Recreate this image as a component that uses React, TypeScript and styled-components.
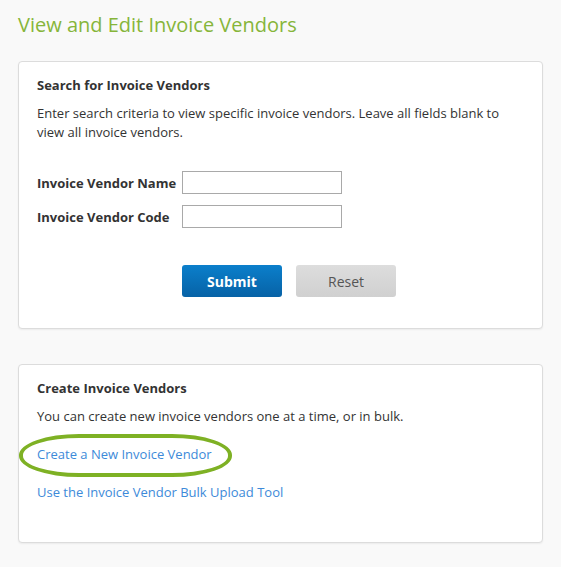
import React from 'react';
import styled, { createGlobalStyle } from 'styled-components';

const GlobalStyle = createGlobalStyle`
  html, body {
    margin: 0;
    padding: 0;
    background: #f9f9f9;
  }
  body {
    font-family: "Open Sans", "Liberation Sans", Arial, sans-serif;
    color: #333;
    font-size: 13px;
  }
`;

const Page = styled.div`
  padding: 11px 18px 24px 18px;
  width: 525px;
`;

const Title = styled.h1`
  margin: 0 0 22px 0;
  font-size: 20px;
  line-height: 28px;
  font-weight: 400;
  color: #86b53a;
`;

const Card = styled.section<{ gapAfter?: number }>`
  background: #fff;
  border: 1px solid #dcdcdc;
  border-radius: 4px;
  box-shadow: 0 1px 2px rgba(0, 0, 0, 0.06);
  padding: 14px 18px 31px 18px;
  margin-bottom: ${p => p.gapAfter ?? 0}px;
`;

const CardHeading = styled.h2`
  margin: 0;
  font-size: 13px;
  line-height: 18px;
  font-weight: 700;
  color: #333;
`;

const Text = styled.p`
  margin: 10px 0 0 0;
  font-size: 13px;
  line-height: 19px;
  color: #333;
`;

const Form = styled.form`
  display: grid;
  grid-template-columns: 145px auto;
  row-gap: 11px;
  align-items: center;
  justify-content: start;
  margin-top: 29px;
`;

const Label = styled.label`
  font-weight: 700;
  font-size: 13px;
  line-height: 18px;
`;

const Input = styled.input`
  box-sizing: border-box;
  width: 160px;
  height: 23px;
  border: 1px solid #a9a9a9;
  border-radius: 0;
  padding: 2px 4px;
  font: inherit;
`;

const Actions = styled.div`
  grid-column: 2;
  display: flex;
  gap: 14px;
  margin-top: 26px;
`;

const Button = styled.button<{ variant: 'primary' | 'secondary' }>`
  flex: 0 0 auto;
  width: 100px;
  height: 32px;
  border: none;
  border-radius: 3px;
  font-family: inherit;
  font-size: 14px;
  font-weight: ${p => (p.variant === 'primary' ? 700 : 400)};
  color: ${p => (p.variant === 'primary' ? '#fff' : '#555')};
  background: ${p =>
    p.variant === 'primary'
      ? 'linear-gradient(#0b7fcb, #0762a6)'
      : 'linear-gradient(#dddddd, #d0d0d0)'};
  cursor: pointer;
`;

const LinkList = styled.div`
  display: flex;
  flex-direction: column;
  gap: 19px;
  margin-top: 19px;
  padding-bottom: 9px;
`;

const LinkWrap = styled.div`
  position: relative;
  align-self: flex-start;
`;

const Link = styled.a`
  color: #3d8ad9;
  text-decoration: none;
  font-size: 13px;
  line-height: 19px;
  display: inline-block;
`;

const Highlight = styled.span`
  position: absolute;
  left: -18px;
  top: -11px;
  width: 205px;
  height: 35px;
  border: 4px solid #7eb124;
  border-radius: 60px / 21px;
  pointer-events: none;
`;

export default function App() {
  return (
    <>
      <GlobalStyle />
      <Page>
        <Title>View and Edit Invoice Vendors</Title>
        <Card gapAfter={35}>
          <CardHeading>Search for Invoice Vendors</CardHeading>
          <Text>
            Enter search criteria to view specific invoice vendors. Leave all fields blank to view all invoice vendors.
          </Text>
          <Form onSubmit={e => e.preventDefault()}>
            <Label htmlFor="vendor-name">Invoice Vendor Name</Label>
            <Input id="vendor-name" type="text" />
            <Label htmlFor="vendor-code">Invoice Vendor Code</Label>
            <Input id="vendor-code" type="text" />
            <Actions>
              <Button variant="primary" type="submit">Submit</Button>
              <Button variant="secondary" type="reset">Reset</Button>
            </Actions>
          </Form>
        </Card>
        <Card>
          <CardHeading>Create Invoice Vendors</CardHeading>
          <Text>You can create new invoice vendors one at a time, or in bulk.</Text>
          <LinkList>
            <LinkWrap>
              <Link href="#">Create a New Invoice Vendor</Link>
              <Highlight />
            </LinkWrap>
            <LinkWrap>
              <Link href="#">Use the Invoice Vendor Bulk Upload Tool</Link>
            </LinkWrap>
          </LinkList>
        </Card>
      </Page>
    </>
  );
}
